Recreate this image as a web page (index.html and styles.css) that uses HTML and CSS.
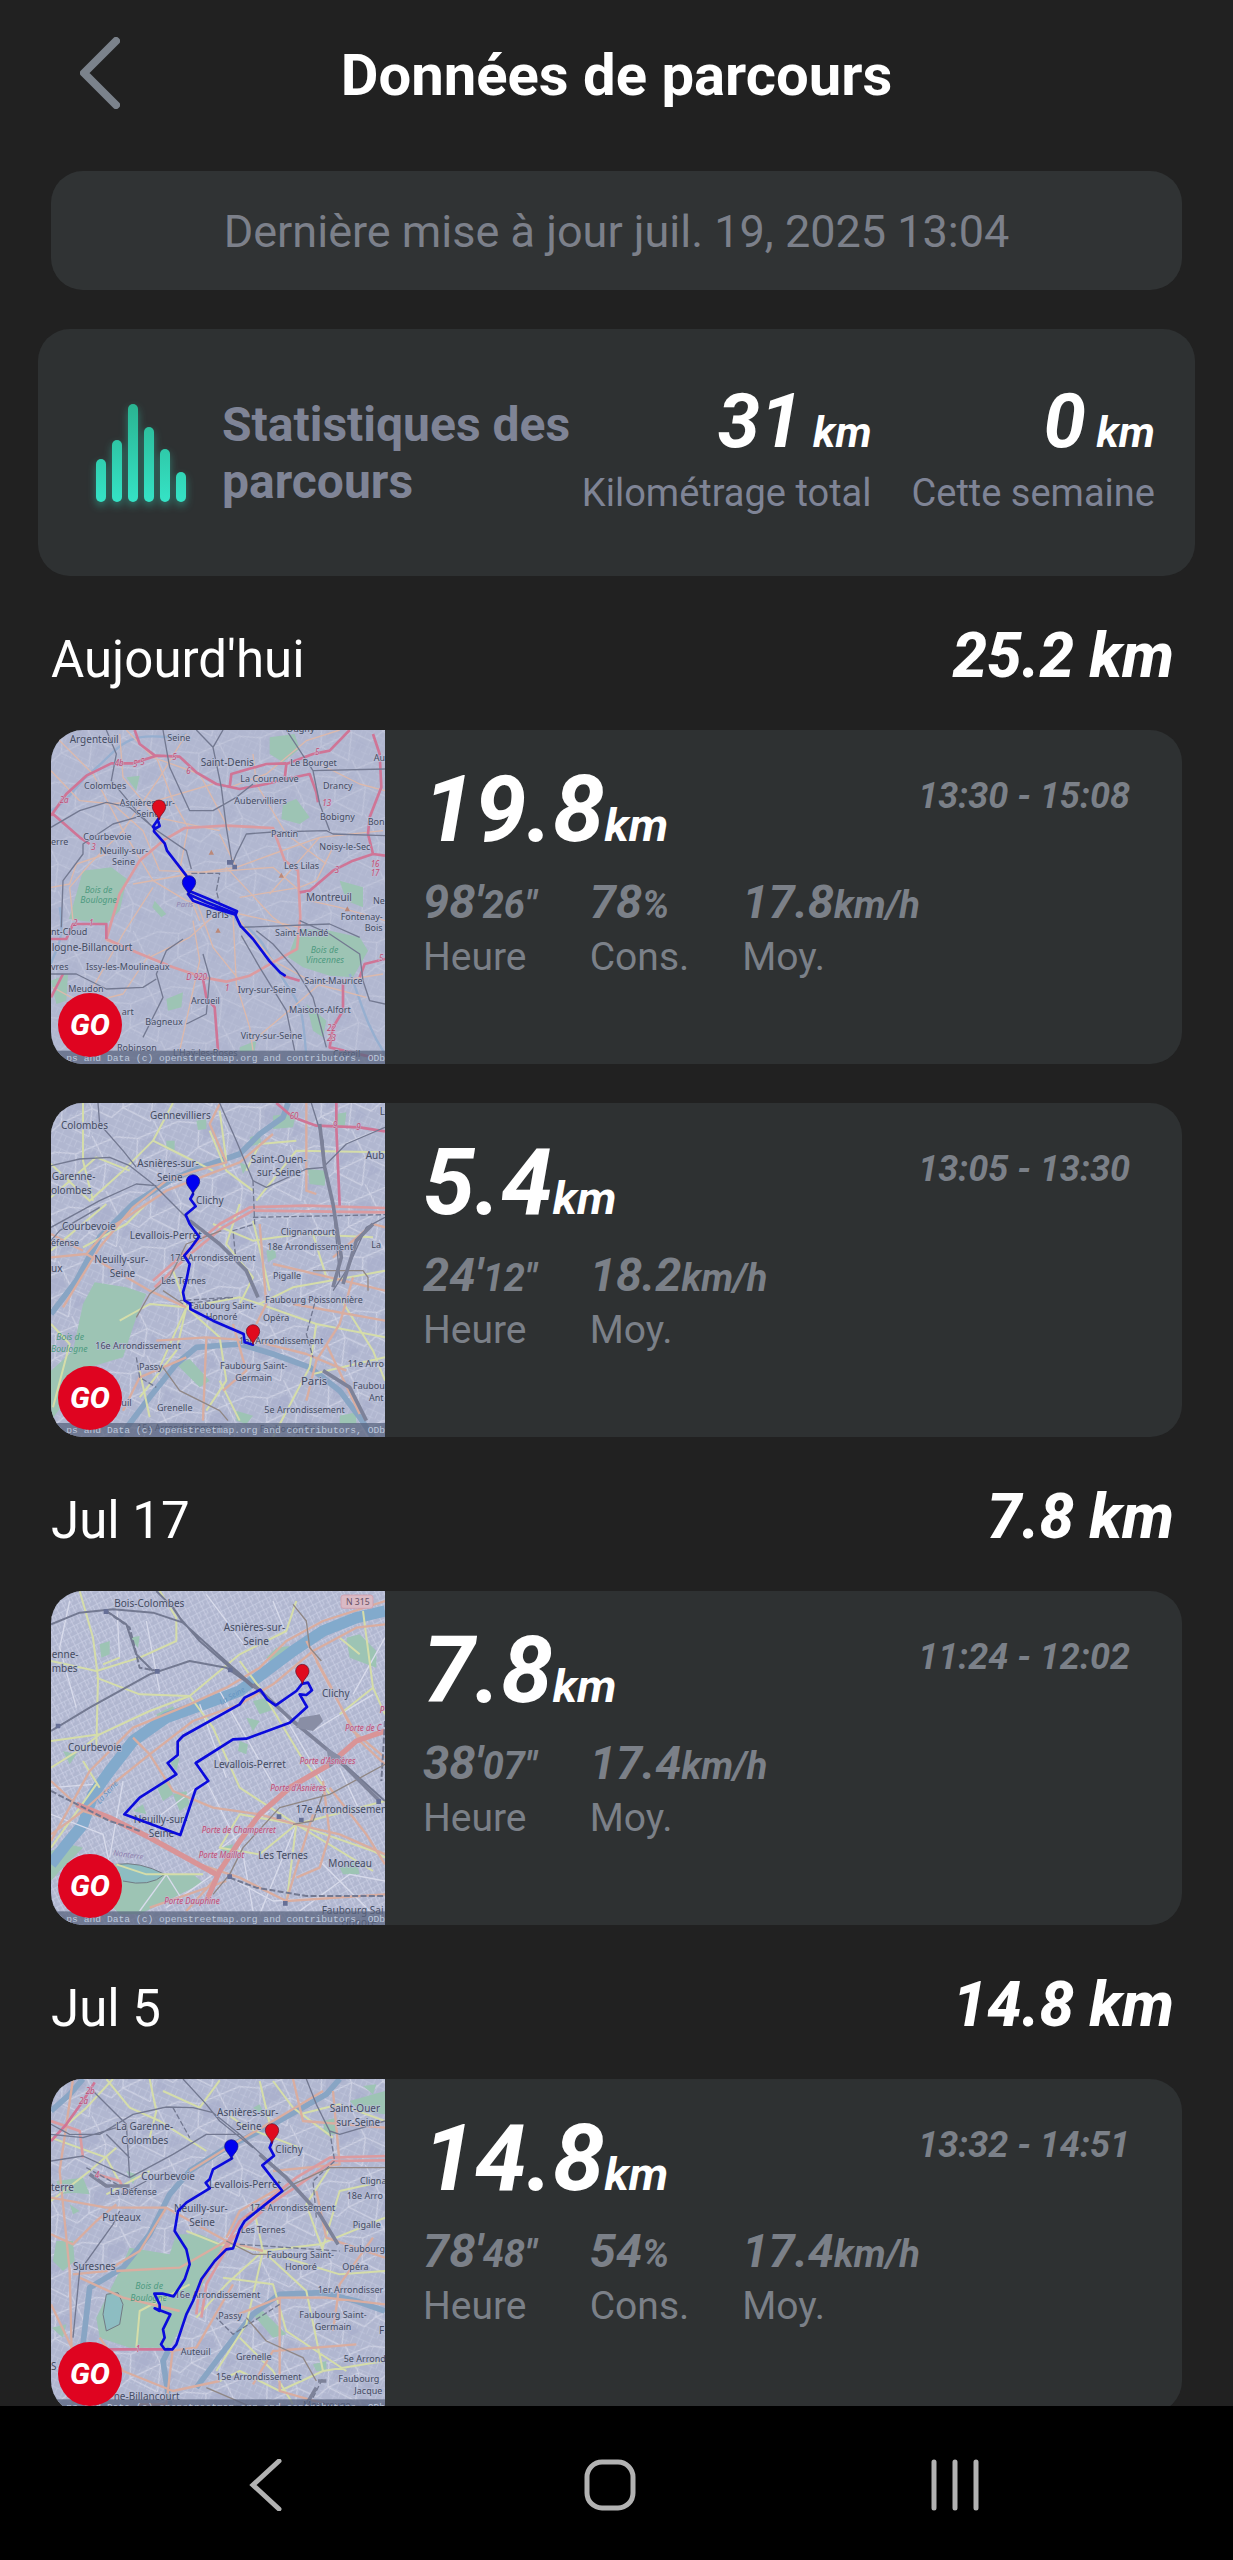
FILE: index.html
```html
<!DOCTYPE html>
<html lang="fr">
  <head>
    <meta charset="UTF-8" />
    <meta name="viewport" content="width=device-width, initial-scale=1.0" />
    <title>Données de parcours</title>
    <link rel="stylesheet" href="styles.css" />
  </head>
  <body>
    <!-- shared map shapes -->
    <svg class="defs" aria-hidden="true">
      <defs>
        <path id="pin" d="M0 0C-3 -16 -20 -24 -20 -40A20 20 0 0 1 20 -40C20 -24 3 -16 0 0Z" />
        <pattern id="streets" width="34" height="42" patternUnits="userSpaceOnUse" patternTransform="rotate(24)">
          <path d="M0 8H34M0 29H22M12 0V42M27 8V29" class="minor" />
        </pattern>
        <pattern id="blocks" width="23" height="27" patternUnits="userSpaceOnUse" patternTransform="rotate(-27)">
          <path d="M0 5H23M0 18H16M7 0V27M16 5V18" class="minor" />
        </pattern>
        <pattern id="quarters" width="190" height="170" patternUnits="userSpaceOnUse" patternTransform="rotate(-14)">
          <path d="M0 20L60 40L190 20M60 40L40 110L0 130M40 110L110 170M40 110L140 90L190 130M140 90L120 0M140 90L110 170" class="avenue" />
          <path d="M70 50L120 45L125 80L60 95ZM150 110L175 140L130 150Z" class="block" />
        </pattern>
      </defs>
    </svg>

    <div class="app">
      <header class="header">
        <button class="back" aria-label="Retour">
          <svg width="40" height="72" viewBox="0 0 40 72">
            <path d="M36 4L4 36L36 68" />
          </svg>
        </button>
        <h1>Données de parcours</h1>
      </header>

      <main class="content">
        <p class="update">Dernière mise à jour juil. 19, 2025 13:04</p>

        <section class="stats">
          <svg class="bars" width="92" height="98" viewBox="0 0 92 98">
            <defs>
              <linearGradient id="green" x1="0" y1="0" x2="0" y2="98" gradientUnits="userSpaceOnUse">
                <stop offset="0" stop-color="#2ab491" />
                <stop offset="1" stop-color="#35e3c6" />
              </linearGradient>
            </defs>
            <g fill="url(#green)">
              <rect x="0" y="55" width="10" height="43" rx="5" />
              <rect x="16" y="36" width="10" height="62" rx="5" />
              <rect x="32" y="0" width="10" height="98" rx="5" />
              <rect x="48" y="23" width="10" height="75" rx="5" />
              <rect x="64" y="45" width="10" height="53" rx="5" />
              <rect x="80" y="68" width="10" height="30" rx="5" />
            </g>
          </svg>
          <h2>Statistiques des parcours</h2>
          <div class="total">
            <p class="total-value">31 <span>km</span></p>
            <p class="total-label">Kilométrage total</p>
          </div>
          <div class="total">
            <p class="total-value">0 <span>km</span></p>
            <p class="total-label">Cette semaine</p>
          </div>
        </section>

        <section class="day">
          <div class="day-head">
            <h3>Aujourd'hui</h3>
            <p class="day-sum">25.2 km</p>
          </div>
          <a class="ride" href="#">
            <div class="map">
              <svg viewBox="34 28 1002 1002">
                <rect x="34" y="28" width="1002" height="1002" class="land" />
                <rect x="34" y="28" width="1002" height="1002" fill="url(#streets)" opacity=".3" />
                <rect x="34" y="28" width="1002" height="1002" fill="url(#quarters)" opacity=".5" />
                <g class="park">
                  <path d="M130 450L215 440L262 475L240 570L200 610L88 595L110 520Z" />
                  <path d="M775 625L860 628L960 650L985 690L940 770L870 765L790 740L745 710Z" />
                  <path d="M690 50L765 40L780 85L730 125L690 100ZM730 250L770 235L810 290L780 310L725 295ZM380 835L430 815L425 860L385 870ZM345 540L380 580L365 590L338 560ZM800 850L860 900L850 950L820 930ZM34 780L85 760L80 840L50 850ZM600 980L650 960L645 990L600 995ZM900 480L970 500L970 560L920 540ZM260 170L300 165L290 210Z" />
                </g>
                <path class="water" d="M34 270C90 240 110 190 160 150S240 60 300 50S400 60 440 40M60 560C80 660 40 700 34 730M445 515C520 530 560 580 620 620S690 720 740 790S790 880 800 1010M930 760C960 820 970 900 1036 1000" />
                <g class="road">
                  <path d="M34 150L120 240L220 250L310 330L360 450L500 455L700 440L780 510M40 40L160 160L250 330L340 480L440 540L600 580L780 620M240 40L250 170L350 290L540 330M350 110L400 240L445 320L420 450L480 600M440 40L360 170L250 330L150 430L90 500L100 600M120 1000L160 800L250 640L340 500M200 660L330 710L450 650L540 570M460 600L480 720L420 990M580 580L590 790L630 920L640 990M600 600L700 720L830 790L980 830M540 340L590 440L700 400L840 350L1030 330M570 200L680 160L800 60L900 28M560 440L700 590L780 650M280 490L450 460L590 440M34 500L90 490L110 430L200 400M260 28L340 110L480 160L570 330M820 120L960 190L1036 210M640 960L760 860L840 790L1030 760M200 250L350 240L520 190M810 540L900 560L1036 600M880 380L830 480L780 500L600 530M340 320L460 510L520 680L600 780M330 700L250 820L130 850L40 800M640 100L650 190L740 340L860 430M690 520L840 350" />
                </g>
                <g class="ring">
                  <path d="M200 655L240 520L300 420L370 360L435 322L560 315L700 322L735 420L775 450L782 590L772 685L700 725L630 765L560 783L490 770L400 740L290 695Z" />
                </g>
                <g class="motorway">
                  <path d="M34 285L80 220L140 165L215 128L280 128L350 105L420 108L470 155L530 190L600 205L680 190L740 175L810 160L830 215L835 245M285 28L300 70L350 108M735 175L740 130L820 100L870 90L930 28M570 200L575 160L680 130L740 128M1000 40L1020 100L1025 200L990 290L985 340L1000 400L940 420L880 450L810 510L780 515M1000 400L1036 405M34 655H80L100 610H200L200 655M40 280L120 350L150 370M490 775L500 830L525 860L535 990M910 780V870L880 920L870 980L1000 1010M730 765L780 780M960 770L975 730L1036 715M34 830L70 760" />
                </g>
                <g class="rail">
                  <path d="M200 28L230 100L215 180L290 270L345 325L440 390L455 445M370 28L390 140L450 270L520 270L590 230L640 190M520 80L545 200L560 320L578 430L590 400L620 340L700 334L860 330L880 340L1036 345M520 80L470 28M520 80L550 28M34 320L120 270L200 245L270 260L340 320M290 290L220 310L130 370L130 400L70 480L65 620M650 630L700 670L770 750L820 830L860 980M605 645L660 740L740 870L765 990M430 655L380 690L350 760L370 830L310 950M350 775L310 800L200 805L110 760L34 760M780 600L870 640L960 700L970 780L990 840L1036 850M740 28L820 150L840 250L870 330M820 150L1036 145M600 620L870 610L960 650M490 700L510 770L500 880L440 910" />
                  <path d="M455 458H540L530 510L545 570" stroke-dasharray="18 6" />
                </g>
                <path d="M562 418h18v14h-18zM578 432h14v14h-14z" class="station" />
                <g class="peak">
                  <path d="M507 402L515 387L523 402ZM717 471L725 456L733 471ZM527 636L535 621L543 636ZM915 572L923 557L931 572Z" />
                </g>
                <g class="code">
                  <text x="225" y="135">4b</text><text x="280" y="140">5</text><text x="302" y="134">5</text><text x="398" y="118">5</text><text x="440" y="160">6</text>
                  <text x="848" y="256">13</text><text x="155" y="387">3</text><text x="993" y="440">16</text><text x="993" y="465">17</text><text x="440" y="779">D 920</text><text x="556" y="810">1</text><text x="826" y="104">5</text><text x="885" y="456">3</text><text x="60" y="248">2a</text><text x="100" y="616">2</text><text x="148" y="616">1</text><text x="862" y="930">22</text><text x="862" y="962">23</text><text x="1018" y="722">5</text>
                </g>
                <g class="place">
                  <text x="90" y="67">Argenteuil</text><text x="483" y="135">Saint-Denis</text><text x="799" y="542">Montreuil</text><text x="498" y="591">Paris</text><text x="36" y="691">logne-Billancourt</text>
                </g>
                <g class="place small">
                  <text x="383" y="60">Seine</text><text x="741" y="34">Dugny</text><text x="752" y="137">Le Bourget</text><text x="1002" y="122">Au</text><text x="602" y="184">La Courneuve</text><text x="850" y="205">Drancy</text><text x="133" y="205">Colombes</text><text x="240" y="255">Asnières-sur-</text><text x="290" y="290">Seine</text><text x="584" y="251">Aubervilliers</text><text x="841" y="297">Bobigny</text><text x="984" y="314">Bon</text><text x="694" y="350">Pantin</text><text x="34" y="373">erre</text><text x="131" y="358">Courbevoie</text><text x="180" y="399">Neuilly-sur-</text><text x="217" y="434">Seine</text><text x="839" y="389">Noisy-le-Sec</text><text x="733" y="444">Les Lilas</text><text x="1000" y="549">Ne</text><text x="903" y="597">Fontenay-</text><text x="975" y="632">Bois</text><text x="706" y="646">Saint-Mandé</text><text x="34" y="644">nt-Cloud</text><text x="34" y="748">vres</text><text x="139" y="748">Issy-les-Moulineaux</text><text x="794" y="789">Saint-Maurice</text><text x="86" y="815">Meudon</text><text x="594" y="818">Ivry-sur-Seine</text><text x="454" y="849">Arcueil</text><text x="748" y="878">Maisons-Alfort</text><text x="246" y="884">art</text><text x="317" y="914">Bagneux</text><text x="603" y="954">Vitry-sur-Seine</text><text x="232" y="991">Robinson</text><text x="400" y="1006">L'Haÿ-les-Roses</text><text x="880" y="1009">Créteil</text>
                </g>
                <g class="wood"><text x="135" y="516">Bois de</text><text x="122" y="546">Boulogne</text><text x="813" y="697">Bois de</text><text x="798" y="726">Vincennes</text></g>
                <text x="410" y="558" class="faint">Paris</text>
                <rect x="34" y="990" width="1002" height="40" class="strip" />
                <text x="80" y="1021" class="credit">ps and Data (c) openstreetmap.org and contributors. ODb</text>
                <path class="track" d="M358 292L340 318L345 325L360 316L355 300M345 320L343 332L375 368L382 390L440 465M447 510L500 532L592 572L588 582L520 562L460 540L445 520L500 545L585 578L602 615L640 655L690 722L722 756L735 764" />
                <use href="#pin" x="358" y="298" class="pin-end" />
                <use href="#pin" x="448" y="525" class="pin-start" />
              </svg>
              <span class="go">GO</span>
            </div>
            <div class="info">
              <p class="distance">19.8<span>km</span></p>
              <dl class="figures">
                <div><dt>Heure</dt><dd>98'<span>26"</span></dd></div>
                <div><dt>Cons.</dt><dd>78<span>%</span></dd></div>
                <div><dt>Moy.</dt><dd>17.8<span class="unit">km/h</span></dd></div>
              </dl>
            </div>
            <time class="hours">13:30 - 15:08</time>
          </a>

          <a class="ride" href="#">
            <div class="map">
              <svg viewBox="34 37 1002 1002">
                <rect x="34" y="37" width="1002" height="1002" class="land" />
                <rect x="34" y="37" width="1002" height="1002" fill="url(#streets)" opacity=".6" />
                <rect x="34" y="37" width="1002" height="1002" fill="url(#quarters)" />
                <g class="park">
                  <path d="M165 575L260 590L320 610L290 680L250 800L150 830L34 990V840L100 780L130 640Z" />
                  <path d="M410 820L450 805L510 870L480 890ZM805 235L860 240L855 285L810 280ZM630 140L660 130L665 160L635 165ZM680 480L705 470L710 500L685 515ZM890 70L920 65L915 110L890 100ZM700 75L770 65L760 110L700 115ZM470 90L500 85L500 115L475 118ZM380 150L405 150L405 180L380 175ZM590 960L640 975L620 1000L590 990ZM900 975L950 965L950 1000L900 1000ZM600 215L625 225L610 250Z" />
                </g>
                <path class="water wide" d="M34 670L110 570L180 440L280 340L390 270L470 235L600 190L660 130L730 80L745 37" />
                <path class="water wide" d="M240 1039L330 920L410 820L470 770L600 760L700 790L810 830L900 900L960 980L1000 1039" />
                <g class="yellow">
                  <path d="M34 220L150 330L250 240L340 150L400 37M340 150L420 190L520 240M130 37V210L160 330M34 320L170 200L270 240M130 470L260 400L320 340M510 120L560 240L640 300M540 60L560 210M600 340L560 460L640 560L600 640M640 390L690 600M520 400L640 450L780 430L1000 440M660 640L760 590L930 560L1036 540M440 650L600 620L660 640L830 700L1036 740M440 650L360 830M440 650L330 640L240 690M440 650L400 540M440 650L540 740L560 870L500 960M440 650L410 780L300 920M300 840L330 980M34 480L200 340M770 180L1036 185M770 180L650 330M820 430L860 560M830 700L810 830L700 1039M820 850L1036 800M540 870L600 990M900 620L1000 780L1036 870M620 240L660 160L770 150M40 950L90 760L34 700" />
                </g>
                <g class="road thick">
                  <path d="M34 500L140 490L330 600L440 650M540 40L510 100L560 215L470 240L380 270L280 350L180 470L70 650M140 490L200 420L380 300L600 215L700 130M800 37L800 300L830 310M880 500L1000 400L1036 410M660 400L680 640L650 700M350 750L500 740L640 750L800 790L920 840M500 740L490 990M940 560L900 700L830 810L800 930M440 800L300 860L250 960M580 700L620 840L550 900M700 520L870 560L1036 600M760 640L1036 690M860 760L960 970M34 430L130 480" />
                </g>
                <g class="ring"><path d="M340 570L420 500L540 400L630 350L800 345L1036 352M345 590L440 500L550 410L640 360L1036 365" /></g>
                <g class="motorway"><path d="M710 37L760 80L830 105L960 110L1036 122M890 37V110L900 345" /></g>
                <g class="rail">
                  <path d="M34 225L120 205L210 200L270 225L340 280L450 390L540 460L620 540L655 620M175 37L180 100L250 180L290 230M34 410L180 330L290 280L350 285M540 37L590 150L640 270L680 290L800 235L855 230M815 37L850 150L855 220L880 340L900 560M855 225L920 160L1036 110M1036 380L980 410L920 540L880 600M34 450L60 420L180 350" />
                  <path d="M640 270L645 400L580 420L590 520M760 640L830 620L800 730L820 800M580 620L440 640M640 380L1036 372M290 800L300 860L350 890M570 620L420 630" stroke-dasharray="16 7" />
                  <path d="M545 420L440 460L390 560L330 610L290 680M370 600L430 640M820 540H970L985 560V600M370 830L420 900L540 960L565 990" class="brown" />
                </g>
                <path class="rail fat" d="M450 390L540 460L620 540L655 620M840 100L855 230L880 340L905 500L880 590M1000 400L950 450L910 580M850 840L930 890L980 990" />
                <g class="place">
                  <text x="331" y="85">Gennevilliers</text><text x="64" y="115">Colombes</text><text x="1020" y="73">L</text><text x="293" y="229">Asnières-sur-</text><text x="352" y="270">Seine</text><text x="633" y="216">Saint-Ouen-</text><text x="652" y="257">sur-Seine</text><text x="978" y="205">Aub</text><text x="36" y="269">Garenne-</text><text x="34" y="311">olombes</text><text x="469" y="339">Clichy</text><text x="67" y="418">Courbevoie</text><text x="270" y="444">Levallois-Perret</text><text x="164" y="517">Neuilly-sur-</text><text x="210" y="558">Seine</text><text x="34" y="543">ux</text><text x="784" y="883" class="big">Paris</text>
                </g>
                <g class="place small">
                  <text x="34" y="467">éfense</text><text x="723" y="432">Clignancourt</text><text x="683" y="477">18e Arrondissement</text><text x="995" y="472">La</text><text x="391" y="512">17e Arrondissement</text><text x="700" y="565">Pigalle</text><text x="365" y="580">Les Ternes</text><text x="676" y="636">Faubourg Poissonnière</text><text x="448" y="654">Faubourg Saint-</text><text x="498" y="689">Honoré</text><text x="670" y="691">Opéra</text><text x="598" y="759">1er Arrondissement</text><text x="167" y="776">16e Arrondissement</text><text x="298" y="838">Passy</text><text x="541" y="835">Faubourg Saint-</text><text x="587" y="870">Germain</text><text x="924" y="829">11e Arro</text><text x="940" y="895">Faubou</text><text x="988" y="930">Ant</text><text x="352" y="960">Grenelle</text><text x="674" y="966">5e Arrondissement</text><text x="245" y="946">uil</text><text x="292" y="1020">15e Arrondissement</text><text x="660" y="1024">Faubourg Sai</text>
                </g>
                <g class="wood"><text x="50" y="748">Bois de</text><text x="34" y="783">Boulogne</text></g>
                <g class="code"><text x="750" y="86">60</text><text x="880" y="112">9</text><text x="950" y="119">9</text></g>
                <rect x="34" y="997" width="1002" height="42" class="strip" />
                <text x="80" y="1028" class="credit">ps and Data (c) openstreetmap.org and contributors, ODb</text>
                <path class="track" d="M460 310L452 325L468 347L438 372L450 400L478 438L455 470L434 495L450 520L440 570L430 605L435 630L452 640V655L520 690L612 730L615 755L640 762" />
                <use href="#pin" x="460" y="312" class="pin-start" />
                <use href="#pin" x="640" y="762" class="pin-end" />
              </svg>
              <span class="go">GO</span>
            </div>
            <div class="info">
              <p class="distance">5.4<span>km</span></p>
              <dl class="figures">
                <div><dt>Heure</dt><dd>24'<span>12"</span></dd></div>
                <div><dt>Moy.</dt><dd>18.2<span class="unit">km/h</span></dd></div>
              </dl>
            </div>
            <time class="hours">13:05 - 13:30</time>
          </a>
        </section>

        <section class="day">
          <div class="day-head">
            <h3>Jul 17</h3>
            <p class="day-sum">7.8 km</p>
          </div>
          <a class="ride" href="#">
            <div class="map">
              <svg viewBox="34 30 1002 1002">
                <rect x="34" y="30" width="1002" height="1002" class="land" />
                <rect x="34" y="30" width="1002" height="1002" fill="url(#blocks)" />
                <g class="park">
                  <path d="M190 850L280 850L370 880L460 880L490 905L400 950L300 1000H240L180 940ZM34 810L90 790L130 800L60 870L34 900Z" />
                  <path d="M350 400L400 375L410 400L360 425ZM680 230L710 200L750 195L740 215L700 245ZM920 170L960 160L1010 210L1010 260L930 230ZM640 360L680 350L705 385L660 400ZM900 860L950 840L960 880L910 880ZM350 615L390 600L400 640L370 660ZM400 640L440 630L450 670L420 690ZM180 190L210 180L210 220L185 230ZM270 170L300 165L295 200ZM600 480L625 490L620 520L595 510ZM70 510L110 520L90 550ZM280 690L310 670L320 700ZM620 410L660 420L640 450ZM390 540L420 530L410 570ZM540 800L580 790L570 830Z" />
                </g>
                <path class="river" d="M34 850L80 790L130 730L160 640L210 570L280 480L380 410L520 360L600 330L680 270L760 210L850 150L950 110L1036 90" />
                <path d="M230 850Q300 840 375 880Q330 920 250 900" class="lake" />
                <g class="street">
                  <path d="M34 700L190 760L210 850M250 600L210 830M90 60L60 200L110 380M230 50L240 230M320 120L360 330M500 40L620 200M370 800L340 720L470 620M500 600L610 820L640 990M380 880L300 990M380 880L430 960M660 1000L770 730M780 990L930 880L1036 900M840 840L1000 1000M690 690L520 820M820 450L1000 340M900 560L960 690M480 370L560 590M540 330L700 610M720 380L860 620M590 900L700 960L860 950M700 60L740 160M1036 170L940 340M380 980L520 880M34 620L160 610" />
                </g>
                <g class="yellow">
                  <path d="M120 30L160 170L175 290L170 500M34 480L180 460L330 390L450 345L600 220L740 150L770 60M170 290L300 340L450 345L520 440L600 620L770 730M34 240L170 270L300 230L410 180L410 110L360 30M240 230L190 250M600 240L660 320L780 520L870 640M770 730L660 820L540 800L600 700L770 730L1000 810L1036 830M770 730L740 970M770 730L1036 660M770 730L1000 870M970 90L1000 320L1036 400M1000 320L900 400M130 540L180 620M34 560L130 500L180 460M230 850L320 880L490 880M960 220L900 170M34 800L170 610" />
                </g>
                <g class="road thick">
                  <path d="M34 600L130 690L280 740L480 850L600 890L740 960L1036 940M280 470L330 520L400 630L520 680L660 700L770 730L900 760L1036 820M34 760L130 690L230 600L330 520L460 420L600 370L700 310L820 210L950 140L1036 130M34 780L150 570L280 440L450 370L560 320L660 260L740 180L850 120L1036 60M800 180L870 310L940 450L1036 530M830 240L900 370L960 480L1036 550M870 620L980 760L1036 850M770 890L840 860L870 760L850 600M530 890L440 990M560 900L330 980M820 700L740 960" />
                </g>
                <path class="boulevard" d="M500 960L540 870L600 780L660 700L750 620L870 550L950 480L1036 450M110 670L210 710L330 770L530 880" />
                <g class="rail">
                  <path d="M34 130L120 95L220 85L340 95L430 125L580 260L660 330L760 420L880 520L1036 660M200 90L260 130L290 220L340 270M34 450L150 380L330 280L450 240L560 260L660 330M420 110L480 180L640 320M350 30L400 80L430 125" class="mid" />
                  <path d="M200 90L270 140L300 260L355 270M34 630L210 720L300 750M570 890L650 920L800 945H1036M1036 420L1025 600" stroke-dasharray="18 7" class="mid" />
                  <path d="M760 70L800 120L810 200L845 240M850 640L820 720L760 730M1036 550L870 640L720 680L610 800L570 880L520 940" class="brown" />
                </g>
                <path class="rail fat" d="M640 310L760 420L880 520L1020 660" />
                <path d="M780 410L840 400L850 420L820 450L770 440ZM860 500L910 530L870 560Z" class="yard" />
                <g class="station"><path d="M48 428h14v14h-14zM192 85h14v14h-14zM346 264h14v14h-14zM565 260h14v14h-14zM711 700h14v14h-14zM778 710h14v14h-14zM730 960h14v14h-14zM563 880h14v14h-14zM1010 655h14v14h-14z" /></g>
                <rect x="904" y="42" width="96" height="40" rx="8" class="shield" />
                <text x="919" y="72" class="shield-text">N 315</text>
                <g class="place">
                  <text x="224" y="79">Bois-Colombes</text><text x="552" y="151">Asnières-sur-</text><text x="611" y="193">Seine</text><text x="36" y="232">enne-</text><text x="36" y="274">mbes</text><text x="847" y="349">Clichy</text><text x="85" y="510">Courbevoie</text><text x="522" y="562">Levallois-Perret</text><text x="282" y="727">Neuilly-sur-</text><text x="327" y="768">Seine</text><text x="656" y="834">Les Ternes</text><text x="866" y="858">Monceau</text><text x="768" y="697">17e Arrondissemen</text><text x="846" y="998">Faubourg Sai</text><text x="905" y="1034">Honoré</text>
                </g>
                <g class="gate"><text x="916" y="450">Porte de C</text><text x="780" y="548">Porte d'Asnières</text><text x="692" y="631">Porte d'Asnières</text><text x="486" y="756">Porte de Champerret</text><text x="477" y="831">Porte Maillot</text><text x="374" y="969">Porte Dauphine</text><text x="1020" y="395">P</text></g>
                <g class="river-name"><text x="545" y="372" transform="rotate(-30 545 372)">La Seine</text><text x="180" y="670" transform="rotate(-48 180 670)">La Seine</text></g>
                <text x="220" y="823" class="district" transform="rotate(8 220 823)">Nanterre</text>
                <rect x="34" y="991" width="1002" height="41" class="strip" />
                <text x="80" y="1023" class="credit">ps and Data (c) openstreetmap.org and contributors, ODb</text>
                <path class="track" d="M790 305L770 330L708 373L682 355L662 326L615 350L600 370L430 465L414 482V522L384 546L410 580L300 650L254 700L422 762L468 625L506 600L468 546L580 475L620 473L750 425L802 378L780 340L800 342L817 328L805 305L790 308" />
                <use href="#pin" x="788" y="310" class="pin-end" />
              </svg>
              <span class="go">GO</span>
            </div>
            <div class="info">
              <p class="distance">7.8<span>km</span></p>
              <dl class="figures">
                <div><dt>Heure</dt><dd>38'<span>07"</span></dd></div>
                <div><dt>Moy.</dt><dd>17.4<span class="unit">km/h</span></dd></div>
              </dl>
            </div>
            <time class="hours">11:24 - 12:02</time>
          </a>
        </section>

        <section class="day">
          <div class="day-head">
            <h3>Jul 5</h3>
            <p class="day-sum">14.8 km</p>
          </div>
          <a class="ride" href="#">
            <div class="map">
              <svg viewBox="34 24 1002 1002">
                <rect x="34" y="24" width="1002" height="1002" class="land" />
                <rect x="34" y="24" width="1002" height="1002" fill="url(#streets)" opacity=".6" />
                <rect x="34" y="24" width="1002" height="1002" fill="url(#quarters)" />
                <g class="park">
                  <path d="M270 530L390 550L410 490L480 490L550 520L500 620L440 740L390 830L270 830L180 800L170 740L240 600Z" />
                  <path d="M50 510L100 510L105 570L70 600L40 570ZM50 330L130 320L150 370L100 365L60 370ZM640 730L670 720L740 790L700 800ZM370 700L440 700L430 770L385 800ZM930 90L1036 60V130L960 120ZM850 150L890 140L890 190L855 190ZM640 110L660 100L680 140ZM90 400L120 420L100 430ZM970 45L1010 40L1000 70ZM820 880L860 870L860 900L830 900ZM260 300L290 310L280 340ZM36 770L80 760L70 800Z" />
                </g>
                <path d="M200 670L235 665L250 700L240 760L200 780L190 730Z" class="lake" />
                <path class="water wide" d="M34 120L90 70L130 24M130 820L150 650L250 590L330 490L390 370L450 300L560 230L700 160L860 70L900 24M390 1000L370 870L390 830M470 950L560 830L640 730L720 670L850 665L950 690L1036 720" />
                <g class="yellow">
                  <path d="M370 60L480 110L540 28M200 24L270 110L360 150L500 240M34 390L150 300L230 230M550 120L620 170L780 230M330 24L350 120L330 200M700 30L760 110L880 200M780 130L900 100L1036 150M670 540L840 520L1036 440M670 540L560 640L470 740M670 540L540 520L440 480M670 540L640 400M670 540L620 760L530 900M670 540L800 660L850 900M670 540L900 610L1036 600M840 560L900 360L1036 330M870 290L800 400L850 540M660 30L700 200M290 830L300 720L450 640M550 620L700 640L740 780L920 900M600 800L700 900L760 1000M850 900L720 960L600 900L540 930M850 900L1036 870M220 24L140 110L60 180M34 200L200 260L260 370M200 370L330 300" />
                </g>
                <g class="road thick">
                  <path d="M34 380L200 410L380 410L560 510L670 540M34 490L100 520L170 450L230 400M450 300L580 220L700 150L850 60M380 410L300 540L200 600L100 610M230 600L420 590L560 510M120 620L250 680L420 720M100 24L60 300L90 600L100 1000M570 740L720 680L860 680L1036 700M560 500L600 420L720 350M580 640L470 830L390 840M720 680V960L860 1000M700 300L900 280L880 60M1000 500L900 640L880 780M400 830L380 1000L300 1000M830 360L860 500L1036 560M540 930L400 960L250 900L180 800M34 700L130 900M760 24L790 150L1036 170M640 940L700 840L950 820" />
                </g>
                <g class="ring"><path d="M470 730L480 640L560 520L600 450L680 390L770 320L870 260L1036 255M485 740L500 640L580 500L690 400L780 340L880 270L1036 268M34 150L120 180L130 260M170 310L240 330L260 370" /></g>
                <g class="motorway"><path d="M34 210L80 160L130 90L165 34M160 835H390" /></g>
                <g class="rail">
                  <path d="M34 160L90 190L180 190L280 130L380 108L460 110L520 125L600 190L740 320L840 430L895 520M430 24L500 100L540 150L640 230M34 270L130 255L270 320L400 250L500 190L600 190M34 190L130 200L230 170M240 420L220 460L120 600L100 800M270 320L260 160L160 60M800 24L830 100L870 180L900 190L1036 150M245 370L320 330M200 190L270 260" />
                  <path d="M400 110L450 200M870 180L885 270L820 330L830 440M600 520L900 540M720 700L580 790L530 740M820 980L850 920M140 290L250 350" stroke-dasharray="16 7" />
                  <path d="M560 510L640 550L720 550M620 740L680 810L790 860L830 930M500 950L640 1010M1036 290H870L760 340L620 440" class="brown" />
                </g>
                <path class="rail fat" d="M660 250L740 320L840 430L895 520M150 310L200 345H270M835 930H860M830 950L800 1000" />
                <g class="code"><text x="138" y="68">2b</text><text x="118" y="100">2a</text><text x="165" y="322">4</text><text x="288" y="843">1</text></g>
                <g class="place">
                  <text x="532" y="136">Asnières-sur-</text><text x="589" y="177">Seine</text><text x="870" y="124">Saint-Ouer</text><text x="890" y="165">sur-Seine</text><text x="229" y="177">La Garenne-</text><text x="245" y="218">Colombes</text><text x="707" y="246">Clichy</text><text x="305" y="326">Courbevoie</text><text x="508" y="351">Levallois-Perret</text><text x="34" y="359">terre</text><text x="188" y="449">Puteaux</text><text x="403" y="424">Neuilly-sur-</text><text x="449" y="465">Seine</text><text x="100" y="597">Suresnes</text><text x="222" y="988">ne-Billancourt</text><text x="34" y="898">S</text><text x="1018" y="788">F</text>
                </g>
                <g class="place small">
                  <text x="211" y="373">La Défense</text><text x="961" y="340">Cligna</text><text x="921" y="384">18e Arro</text><text x="630" y="419">17e Arrondissement</text><text x="939" y="471">Pigalle</text><text x="603" y="486">Les Ternes</text><text x="913" y="543">Faubourg</text><text x="681" y="561">Faubourg Saint-</text><text x="736" y="597">Honoré</text><text x="908" y="598">Opéra</text><text x="405" y="682">16e Arrondissement</text><text x="834" y="666">1er Arrondisser</text><text x="536" y="745">Passy</text><text x="779" y="741">Faubourg Saint-</text><text x="825" y="777">Germain</text><text x="423" y="852">Auteuil</text><text x="589" y="866">Grenelle</text><text x="912" y="872">5e Arrond</text><text x="529" y="926">15e Arrondissement</text><text x="896" y="932">Faubourg</text><text x="944" y="968">Jacque</text><text x="790" y="1010">Montrouge</text>
                </g>
                <g class="wood"><text x="287" y="654">Bois de</text><text x="272" y="690">Boulogne</text></g>
                <rect x="34" y="985" width="1002" height="41" class="strip" />
                <text x="80" y="1017" class="credit">ps and Data (c) openstreetmap.org and contributors, ODb</text>
                <path class="track" d="M577 262L520 295L510 325L498 335L510 352L440 395L415 420L405 480L440 535L450 580L435 625L402 676L368 668H344L360 700V720L345 712L392 730L370 775L375 800L364 820L375 835H398L410 820L440 730L460 690L485 625L525 570L560 535L580 532L600 475L615 450L728 360L668 283L703 254L690 230L697 212" />
                <use href="#pin" x="575" y="266" class="pin-start" />
                <use href="#pin" x="697" y="218" class="pin-end" />
              </svg>
              <span class="go">GO</span>
            </div>
            <div class="info">
              <p class="distance">14.8<span>km</span></p>
              <dl class="figures">
                <div><dt>Heure</dt><dd>78'<span>48"</span></dd></div>
                <div><dt>Cons.</dt><dd>54<span>%</span></dd></div>
                <div><dt>Moy.</dt><dd>17.4<span class="unit">km/h</span></dd></div>
              </dl>
            </div>
            <time class="hours">13:32 - 14:51</time>
          </a>
        </section>
      </main>

      <nav class="navbar">
        <button aria-label="Précédent">
          <svg width="52" height="52" viewBox="0 0 52 52"><path d="M39 2L13 26L39 50" /></svg>
        </button>
        <button aria-label="Accueil">
          <svg width="52" height="52" viewBox="0 0 52 52"><rect x="3" y="3" width="46" height="46" rx="15" /></svg>
        </button>
        <button aria-label="Récents">
          <svg width="52" height="52" viewBox="0 0 52 52"><path d="M5 3V49M26 3V49M47 3V49" /></svg>
        </button>
      </nav>
    </div>
  </body>
</html>
```

FILE: styles.css
```css
* {
  margin: 0;
  padding: 0;
  box-sizing: border-box;
}
body {
  background-color: #212121;
  color: #fff;
  font-family: Roboto, "Liberation Sans", sans-serif;
}
button {
  background: none;
  border: none;
  cursor: pointer;
}
svg {
  display: block;
}
.defs {
  position: absolute;
  width: 0;
  height: 0;
}
.app {
  height: 100vh;
  display: flex;
  flex-direction: column;
}

/* header */
.header {
  display: grid;
  grid-template-columns: 120px 1fr 120px;
  align-items: center;
  min-height: 150px;
  flex-shrink: 0;
}
.back {
  justify-self: end;
  padding-bottom: 4px;
}
.back path {
  fill: none;
  stroke: #7b828b;
  stroke-width: 8;
  stroke-linecap: round;
  stroke-linejoin: round;
}
h1 {
  text-align: center;
  font-size: 58px;
  font-weight: 700;
}

.content {
  flex: 1;
  min-height: 0;
  overflow-y: auto;
  scrollbar-width: none;
  padding: 21px 51px 0;
}
.update {
  padding: 33px 32px 30px;
  border-radius: 32px;
  background-color: #303334;
  color: #7c808a;
  font-size: 45px;
  line-height: 56px;
  text-align: center;
}

/* stats card */
.stats {
  display: flex;
  align-items: center;
  margin: 39px -13px 0;
  padding: 52px 40px 51px 58px;
  border-radius: 32px;
  background-color: #2e3132;
}
.bars {
  margin-right: 34px;
  flex-shrink: 0;
  overflow: visible;
  filter: drop-shadow(0 4px 4px rgba(53, 227, 198, 0.4));
}
h2 {
  flex: 1;
  color: #7f8496;
  font-size: 48px;
  line-height: 57px;
}
.total {
  margin-left: 40px;
  text-align: right;
  white-space: nowrap;
}
h2 + .total {
  margin-left: 0;
}
.total-value {
  font-size: 76px;
  font-weight: 700;
  font-style: italic;
  line-height: 80px;
}
.total-value span {
  margin-left: -8px;
  font-size: 43px;
  line-height: 1;
}
.total-label {
  color: #7f8496;
  font-size: 38px;
  line-height: 64px;
}

/* days */
.day-head {
  display: flex;
  justify-content: space-between;
  align-items: baseline;
  padding: 38px 8px 28px 0;
}
.day-head h3 {
  font-size: 51px;
  font-weight: 400;
  line-height: 84px;
}
.day-sum {
  font-size: 62px;
  font-weight: 800;
  font-style: italic;
  line-height: 84px;
}
.ride {
  display: flex;
  overflow: hidden;
  border-radius: 32px;
  background-color: #2e3132;
  color: #7b8088;
  text-decoration: none;
}
.ride + .ride {
  margin-top: 39px;
}
.map {
  position: relative;
  width: 334px;
  height: 334px;
  flex-shrink: 0;
}
.go {
  position: absolute;
  left: 7px;
  bottom: 7px;
  width: 64px;
  height: 64px;
  border-radius: 50%;
  background-color: #df0420;
  color: #fff;
  font-size: 30px;
  font-weight: 800;
  font-style: italic;
  line-height: 64px;
  text-align: center;
}
.info {
  flex: 1;
  min-width: 0;
  padding: 30px 0 0 38px;
  white-space: nowrap;
}
.distance {
  color: #fff;
  font-size: 93px;
  font-weight: 700;
  font-style: italic;
  line-height: 100px;
}
.distance span {
  font-size: 47px;
  line-height: 1;
}
.figures {
  display: flex;
  gap: 53px;
  margin-top: 12px;
}
.figures div {
  display: flex;
  flex-direction: column-reverse;
}
.figures dt {
  font-size: 39px;
  line-height: 50px;
}
.figures dd {
  font-size: 47px;
  font-weight: 700;
  font-style: italic;
  line-height: 60px;
}
.figures span {
  font-size: 38px;
  line-height: 1;
}
.hours {
  padding: 30px 52px 0 0;
  font-size: 36px;
  font-weight: 700;
  font-style: italic;
  line-height: 72px;
  white-space: nowrap;
}

/* maps */
.land {
  fill: #b1b7d0;
}
.map path,
.minor {
  stroke-linejoin: round;
}
.minor {
  fill: none;
  stroke: #cdd1e6;
  stroke-width: 2;
}
.avenue {
  fill: none;
  stroke: #d3d6e6;
  stroke-width: 3;
}
.block {
  fill: #a5abca;
  opacity: 0.5;
}
.park {
  fill: #9dc4b4;
}
.lake {
  fill: #8dbdc2;
  stroke: #727b84;
  stroke-width: 3;
}
.water,
.river,
.road,
.yellow,
.street,
.ring,
.boulevard,
.motorway,
.rail {
  fill: none;
}
.water {
  stroke: #96afd0;
  stroke-width: 7;
}
.wide {
  stroke: #88a5c4;
  stroke-width: 17;
}
.river {
  stroke: #82aacc;
  stroke-width: 34;
}
.road {
  stroke: #dcb9ac;
  stroke-width: 4;
}
.thick {
  stroke: #d9ada0;
  stroke-width: 7;
}
.yellow {
  stroke: #d5dda9;
  stroke-width: 6;
}
.street {
  stroke: #d8dbeb;
  stroke-width: 4;
}
.ring {
  stroke: #db9ba0;
  stroke-width: 8;
}
.boulevard {
  stroke: #d99497;
  stroke-width: 16;
}
.motorway {
  stroke: #cf7596;
  stroke-width: 8;
}
.rail {
  stroke: #737991;
  stroke-width: 4;
}
.mid {
  stroke-width: 6;
}
.fat {
  stroke: #7d8299;
  stroke-width: 11;
}
.brown {
  stroke: #8f8684;
}
.yard {
  fill: #898ea5;
}
.station {
  fill: #666f96;
}
.peak {
  fill: #bb8878;
}
.place {
  fill: #454c61;
  stroke: #b9bfd8;
  stroke-width: 4;
  paint-order: stroke;
  font-family: "Noto Sans", sans-serif;
  font-size: 30px;
}
.place .big {
  font-size: 34px;
}
.small {
  font-size: 27px;
}
.wood {
  fill: #4e9a80;
  font-family: "Noto Sans", sans-serif;
  font-size: 26px;
  font-style: italic;
}
.faint,
.district,
.river-name {
  fill: #9182af;
  font-family: "Noto Sans", sans-serif;
  font-size: 23px;
  font-style: italic;
}
.river-name {
  fill: #6695c2;
}
.code,
.gate {
  fill: #bd4e75;
  stroke: #c8bad2;
  stroke-width: 3;
  paint-order: stroke;
  font-family: "Noto Sans", sans-serif;
  font-size: 24px;
  font-style: italic;
}
.shield {
  fill: #d9bac5;
  stroke: #d296a5;
  stroke-width: 2;
}
.shield-text {
  fill: #655064;
  font-family: "Noto Sans", sans-serif;
  font-size: 26px;
}
.strip {
  fill: #59647f;
  opacity: 0.75;
}
.credit {
  fill: #bdc8dc;
  font-family: "Liberation Mono", monospace;
  font-size: 29px;
}
.track {
  fill: none;
  stroke: #0b0bdc;
  stroke-width: 8;
  stroke-linecap: round;
}
.pin-start {
  fill: #0000f0;
  stroke: #10107c;
  stroke-width: 2;
}
.pin-end {
  fill: #e00b1d;
  stroke: #5d1026;
  stroke-width: 2;
}

/* system bar */
.navbar {
  display: flex;
  justify-content: space-around;
  align-items: center;
  flex-shrink: 0;
  min-height: 154px;
  padding: 4px 106px 0 94px;
  background-color: #000;
}
.navbar path,
.navbar rect {
  fill: none;
  stroke: #b2b2b2;
  stroke-width: 5;
  stroke-linecap: round;
}
```
